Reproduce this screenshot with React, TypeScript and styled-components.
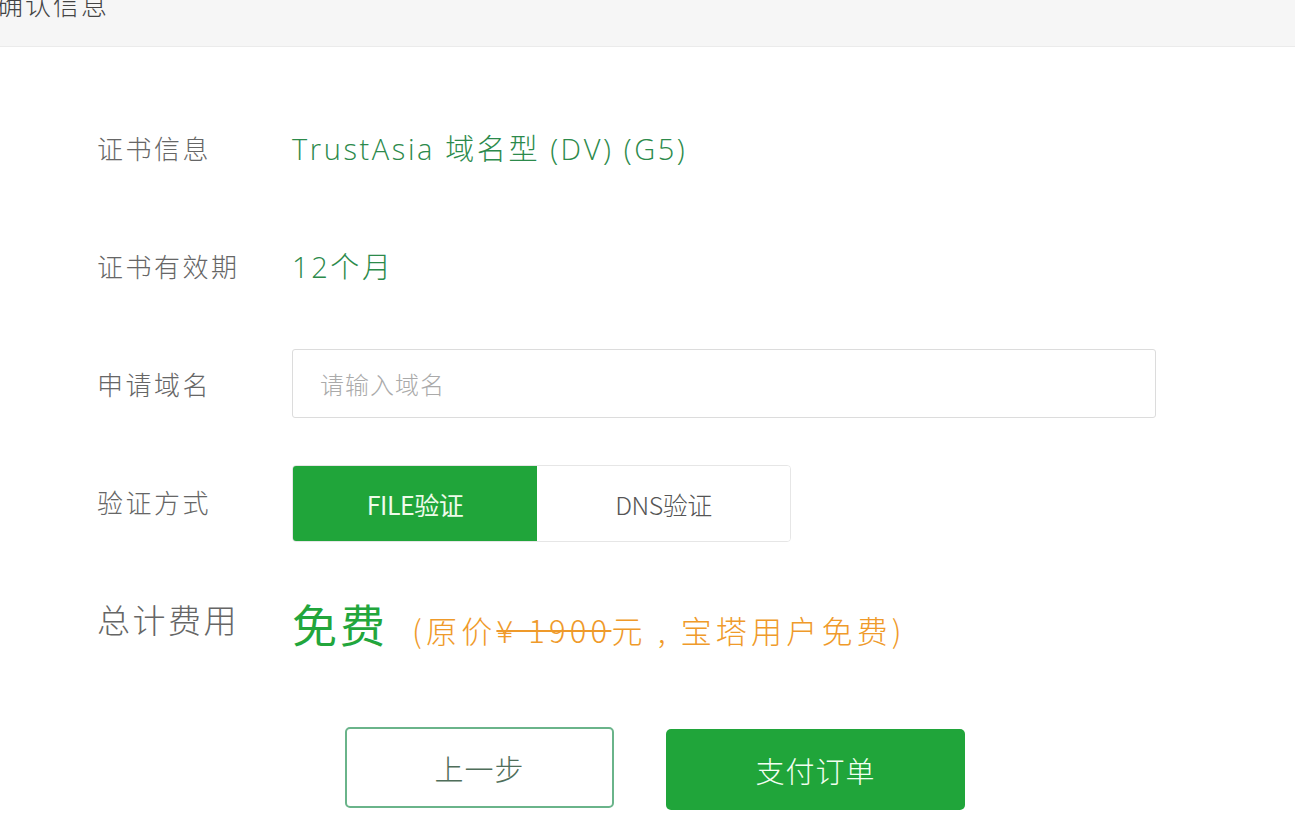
import React from "react";
import styled, { createGlobalStyle } from "styled-components";

const Global = createGlobalStyle`
  html, body { margin: 0; padding: 0; background: #fff; }
  body { font-family: "Noto Sans CJK SC", "Noto Sans", sans-serif; }
  * { box-sizing: border-box; }
`;

const Page = styled.div`
  width: 1295px;
  height: 828px;
  overflow: hidden;
  background: #fff;
`;

const Header = styled.div`
  height: 47px;
  background: #f6f6f6;
  border-bottom: 1px solid #ebebeb;
  overflow: hidden;
  display: flex;
  align-items: flex-start;
`;

const Title = styled.div`
  margin-top: -13px;
  margin-left: -3px;
  font-size: 26px;
  letter-spacing: 2px;
  line-height: 34px;
  color: #444;
  font-weight: 300;
`;

const Form = styled.div`
  padding-top: 41px;
  padding-left: 97px;
`;

const Row = styled.div<{ $h?: number }>`
  display: grid;
  grid-template-columns: 195px 1fr;
  align-items: center;
  height: ${(p) => p.$h ?? 118}px;
`;

const Label = styled.div<{ $big?: boolean }>`
  font-size: ${(p) => (p.$big ? 33 : 26)}px;
  letter-spacing: 2.5px;
  color: #666;
  font-weight: 300;
  white-space: nowrap;
`;

const Value = styled.div`
  font-family: "Open Sans", "Noto Sans CJK SC", sans-serif;
  font-size: 29px;
  letter-spacing: 2.6px;
  color: #2c8a4b;
  font-weight: 300;
  white-space: nowrap;
`;

const Input = styled.input`
  width: 864px;
  height: 69px;
  border: 1px solid #dcdcdc;
  border-radius: 3px;
  padding: 0 27px;
  font-family: inherit;
  font-size: 24px;
  letter-spacing: 1px;
  font-weight: 300;
  color: #333;
  outline: none;
  &::placeholder { color: #aaa; }
`;

const Toggle = styled.div`
  display: flex;
  width: 499px;
  height: 77px;
  margin-top: 5px;
  border: 1px solid #e6e6e6;
  border-radius: 4px;
  overflow: hidden;
`;

const ToggleItem = styled.div<{ $active?: boolean; $w: number }>`
  width: ${(p) => p.$w}px;
  display: flex;
  align-items: center;
  justify-content: center;
  font-size: 25px;
  letter-spacing: -0.5px;
  font-weight: ${(p) => (p.$active ? 400 : 300)};
  background: ${(p) => (p.$active ? "#20a53a" : "#fff")};
  color: ${(p) => (p.$active ? "#eefbe9" : "#555")};
`;

const Total = styled.div`
  display: flex;
  align-items: baseline;
  white-space: nowrap;
  margin-top: 8px;
`;

const Free = styled.span`
  font-size: 45px;
  letter-spacing: 3px;
  color: #22a63c;
  font-weight: 400;
  margin-right: 24px;
`;

const Note = styled.span`
  font-size: 31px;
  letter-spacing: 4.2px;
  color: #ef9a2a;
  font-weight: 300;
`;

const Strike = styled.span`
  text-decoration: line-through;
  text-decoration-thickness: 2px;
`;

const Actions = styled.div`
  display: flex;
  gap: 52px;
  padding-left: 345px;
  margin-top: 49px;
  align-items: flex-start;
`;

const Btn = styled.button<{ $primary?: boolean; $w: number }>`
  width: ${(p) => p.$w}px;
  height: 81px;
  margin-top: ${(p) => (p.$primary ? 2 : 0)}px;
  border-radius: 5px;
  font-family: inherit;
  font-size: 29px;
  font-weight: 300;
  letter-spacing: 1px;
  cursor: pointer;
  border: ${(p) => (p.$primary ? "none" : "2px solid #6ab48a")};
  background: ${(p) => (p.$primary ? "#20a53a" : "#fff")};
  color: ${(p) => (p.$primary ? "#f4fff2" : "#4f6e5a")};
`;

export default function App() {
  return (
    <Page>
      <Global />
      <Header>
        <Title>确认信息</Title>
      </Header>
      <Form>
        <Row>
          <Label>证书信息</Label>
          <Value>TrustAsia 域名型 (DV) (G5)</Value>
        </Row>
        <Row>
          <Label>证书有效期</Label>
          <Value>12个月</Value>
        </Row>
        <Row>
          <Label>申请域名</Label>
          <div>
            <Input placeholder="请输入域名" />
          </div>
        </Row>
        <Row>
          <Label>验证方式</Label>
          <div>
            <Toggle>
              <ToggleItem $active $w={245}>FILE验证</ToggleItem>
              <ToggleItem $w={254}>DNS验证</ToggleItem>
            </Toggle>
          </div>
        </Row>
        <Row>
          <Label $big>总计费用</Label>
          <Total>
            <Free>免费</Free>
            <Note>
              (原价<Strike>¥ 1900</Strike>元 , 宝塔用户免费)
            </Note>
          </Total>
        </Row>
      </Form>
      <Actions>
        <Btn $w={269}>上一步</Btn>
        <Btn $primary $w={299}>支付订单</Btn>
      </Actions>
    </Page>
  );
}
